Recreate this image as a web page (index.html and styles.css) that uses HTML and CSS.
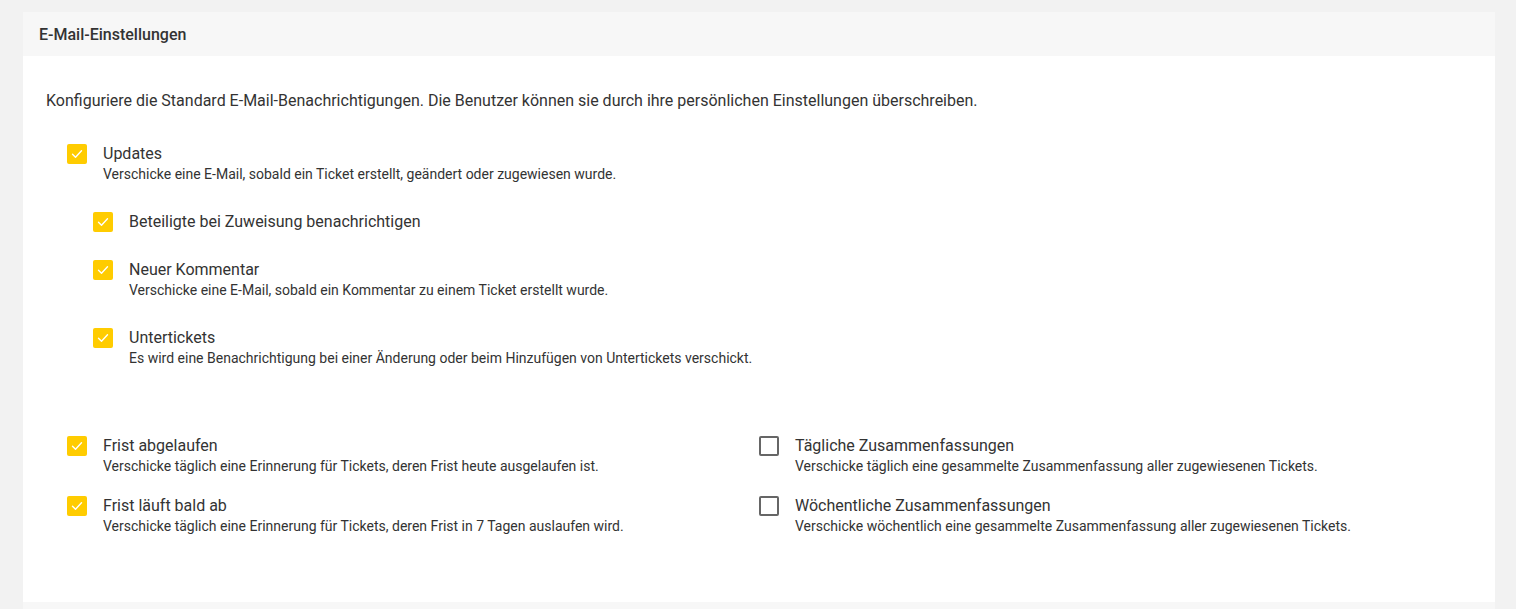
FILE: index.html
```html
<!DOCTYPE html>
<html lang="de">

<head>
    <title>E-Mail-Einstellungen</title>
    <link rel="stylesheet" href="styles.css">
</head>

<body>
    <div class="card">
        <div class="card-header">E-Mail-Einstellungen</div>

        <div class="card-body">
            <p class="intro">Konfiguriere die Standard E-Mail-Benachrichtigungen. Die Benutzer können sie durch ihre persönlichen Einstellungen überschreiben.</p>

            <!-- Ticket updates with sub options -->
            <div class="option-list">
                <label class="option">
                    <span class="box checked">
                        <svg viewBox="0 0 20 20"><path d="M5.5 10.2l3 3 6-6.4"/></svg>
                    </span>
                    <span class="text">
                        <span class="title">Updates</span>
                        <span class="desc">Verschicke eine E-Mail, sobald ein Ticket erstellt, geändert oder zugewiesen wurde.</span>
                    </span>
                </label>

                <div class="sub-options">
                    <label class="option">
                        <span class="box checked">
                            <svg viewBox="0 0 20 20"><path d="M5.5 10.2l3 3 6-6.4"/></svg>
                        </span>
                        <span class="text">
                            <span class="title">Beteiligte bei Zuweisung benachrichtigen</span>
                        </span>
                    </label>

                    <label class="option">
                        <span class="box checked">
                            <svg viewBox="0 0 20 20"><path d="M5.5 10.2l3 3 6-6.4"/></svg>
                        </span>
                        <span class="text">
                            <span class="title">Neuer Kommentar</span>
                            <span class="desc">Verschicke eine E-Mail, sobald ein Kommentar zu einem Ticket erstellt wurde.</span>
                        </span>
                    </label>

                    <label class="option">
                        <span class="box checked">
                            <svg viewBox="0 0 20 20"><path d="M5.5 10.2l3 3 6-6.4"/></svg>
                        </span>
                        <span class="text">
                            <span class="title">Untertickets</span>
                            <span class="desc">Es wird eine Benachrichtigung bei einer Änderung oder beim Hinzufügen von Untertickets verschickt.</span>
                        </span>
                    </label>
                </div>
            </div>

            <!-- Reminders and summaries -->
            <div class="option-grid">
                <label class="option">
                    <span class="box checked">
                        <svg viewBox="0 0 20 20"><path d="M5.5 10.2l3 3 6-6.4"/></svg>
                    </span>
                    <span class="text">
                        <span class="title">Frist abgelaufen</span>
                        <span class="desc">Verschicke täglich eine Erinnerung für Tickets, deren Frist heute ausgelaufen ist.</span>
                    </span>
                </label>

                <label class="option">
                    <span class="box"></span>
                    <span class="text">
                        <span class="title">Tägliche Zusammenfassungen</span>
                        <span class="desc">Verschicke täglich eine gesammelte Zusammenfassung aller zugewiesenen Tickets.</span>
                    </span>
                </label>

                <label class="option">
                    <span class="box checked">
                        <svg viewBox="0 0 20 20"><path d="M5.5 10.2l3 3 6-6.4"/></svg>
                    </span>
                    <span class="text">
                        <span class="title">Frist läuft bald ab</span>
                        <span class="desc">Verschicke täglich eine Erinnerung für Tickets, deren Frist in 7 Tagen auslaufen wird.</span>
                    </span>
                </label>

                <label class="option">
                    <span class="box"></span>
                    <span class="text">
                        <span class="title">Wöchentliche Zusammenfassungen</span>
                        <span class="desc">Verschicke wöchentlich eine gesammelte Zusammenfassung aller zugewiesenen Tickets.</span>
                    </span>
                </label>
            </div>
        </div>

        <div class="card-footer"></div>
    </div>
</body>

</html>
```

FILE: styles.css
```css
body {
    margin: 0;
    padding: 12px 21px 0 23px;
    font-family: Roboto, 'Noto Sans', Arial, sans-serif;
    background-color: #f2f2f2;
    color: #333;
}

/* Card */
.card {
    background-color: #fff;
}

.card-header {
    height: 44px;
    padding: 0 16px;
    display: flex;
    align-items: center;
    background-color: #f7f7f7;
    font-size: 16px;
    font-weight: 500;
    color: #333;
}

.card-body {
    height: 546px;
    box-sizing: border-box;
    padding: 35px 23px 0;
}

.card-footer {
    height: 44px;
    background-color: #f7f7f7;
}

.intro {
    margin: 0 0 33px;
    font-size: 16px;
    line-height: 20px;
    color: #333;
}

/* Options */
.option-list {
    display: flex;
    flex-direction: column;
    gap: 28px;
    padding-left: 21px;
}

.sub-options {
    display: flex;
    flex-direction: column;
    gap: 28px;
    padding-left: 26px;
}

.option-grid {
    display: grid;
    grid-template-columns: 692px 1fr;
    row-gap: 20px;
    padding-left: 21px;
    margin-top: 68px;
}

.option {
    display: flex;
    align-items: flex-start;
    gap: 16px;
    cursor: pointer;
}

.box {
    flex: none;
    width: 20px;
    height: 20px;
    box-sizing: border-box;
    border: 2px solid #666;
    border-radius: 2px;
}

.box.checked {
    border: none;
    background-color: #ffcc00;
}

.box svg {
    display: block;
    width: 20px;
    height: 20px;
    fill: none;
    stroke: #fff;
    stroke-width: 1.4;
    stroke-linecap: round;
    stroke-linejoin: round;
}

.text {
    display: flex;
    flex-direction: column;
}

.title {
    font-size: 16px;
    line-height: 20px;
    color: #333;
}

.desc {
    font-size: 14px;
    line-height: 20px;
    color: #333;
}
```
